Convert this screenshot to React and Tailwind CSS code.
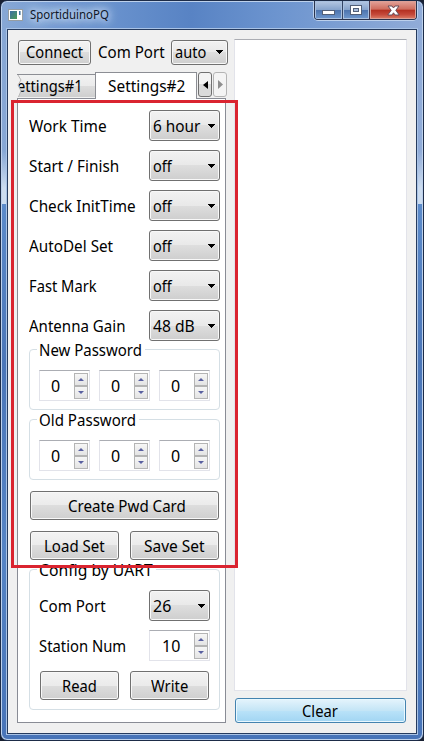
import { useLayoutEffect, useRef, useState } from 'react';
import clsx from 'clsx';

// Label squeezed horizontally to a fixed width, like the condensed system font.
function Label({ w, children, className }) {
  const ref = useRef(null);
  const [scale, setScale] = useState(1);
  useLayoutEffect(() => {
    setScale(w / ref.current.offsetWidth);
  }, [w]);
  return (
    <span className={clsx('block shrink-0 whitespace-nowrap', className)} style={{ width: w }}>
      <span ref={ref} className="inline-block origin-left" style={{ transform: `scaleX(${scale})` }}>
        {children}
      </span>
    </span>
  );
}

const face =
  'border border-[#707070] rounded-[3px] bg-[linear-gradient(#f3f3f3_0%,#ebebeb_50%,#dddddd_50%,#cfcfcf_100%)] shadow-[inset_0_0_0_1px_#f8f8f8]';

function Button({ className, w, children }) {
  return (
    <button className={clsx('flex shrink-0 items-center justify-center', face, className)}>
      <Label w={w}>{children}</Label>
    </button>
  );
}

function Combo({ className, w, children }) {
  return (
    <div className={clsx('flex shrink-0 items-center justify-between rounded-[3px] border border-[#707070] bg-[linear-gradient(#f2f2f2,#e9e9e9_50%,#dedede_50%,#cecece)] pl-[3px] pr-1 shadow-[inset_0_0_0_1px_#f8f8f8]', className)}>
      <Label w={w}>{children}</Label>
      <svg width="8" height="4" viewBox="0 0 8 4" shapeRendering="crispEdges"><path d="M0 0h8L4 4z" /></svg>
    </div>
  );
}

function Arrow({ up }) {
  return (
    <div className="flex h-[13px] w-[14px] items-center justify-center border border-[#b4b4b4] bg-[linear-gradient(#f6f6f6,#e4e4e4)]">
      <svg width="6" height="3" viewBox="0 0 6 3"><path fill="#5960a0" d={up ? 'M0 3h6L3 0z' : 'M0 0h6L3 3z'} /></svg>
    </div>
  );
}

function Spin({ className, w, children }) {
  return (
    <div className={clsx('flex h-[31px] shrink-0 items-center justify-between border border-[#e2e3ea] border-t-[#abadb3] bg-white pr-px', className)}>
      <Label w={w}>{children}</Label>
      <div className="flex flex-col"><Arrow up /><Arrow /></div>
    </div>
  );
}

function Group({ title, w, className, children }) {
  return (
    <fieldset className={clsx('relative w-[191px] shrink-0 rounded-[4px] border border-[#d5dfe5]', className)}>
      <div className="absolute left-[7px] top-[-10px] bg-white pl-[2px] pr-[3px] leading-[20px]"><Label w={w}>{title}</Label></div>
      {children}
    </fieldset>
  );
}

const rows = [
  ['Work Time', 78, '6 hour', 47],
  ['Start / Finish', 90, 'off', 19],
  ['Check InitTime', 107, 'off', 19],
  ['AutoDel Set', 84, 'off', 19],
  ['Fast Mark', 68, 'off', 19],
  ['Antenna Gain', 96, '48 dB', 42],
];

function Passwords({ title, w, className }) {
  return (
    <Group title={title} w={w} className={clsx('h-[61px]', className)}>
      <div className="flex gap-[9px] pl-[9px] pt-5">
        {[0, 1, 2].map((i) => <Spin key={i} className="w-[51px] pl-[11px]" w={9}>0</Spin>)}
      </div>
    </Group>
  );
}

function TitleBar() {
  return (
    <header className="flex h-[28px] shrink-0 items-start justify-between pl-[7px] pr-[6px] text-[12px] leading-[16px]">
      <div className="flex items-center pt-[6px]">
        <svg width="15" height="12" viewBox="0 0 15 12" shapeRendering="crispEdges">
          <path fill="#969da2" d="M0 0h15v12H0z" /><path fill="#fff" d="M1 1h13v10H1z" />
          <defs><linearGradient id="app" x2="1" y2="1"><stop stopColor="#3b6ea5" /><stop offset="1" stopColor="#4a9b55" /></linearGradient></defs>
          <path fill="url(#app)" d="M2 2h7v8H2z" /><path fill="#3e73a4" d="M11 2h1v4h-1z" /><path fill="#96b2c8" d="M12 2h1v4h-1z" />
        </svg>
        <div className="ml-[7px] text-[#101828] [text-shadow:0_0_6px_#d7e5f8,0_0_10px_#d7e5f8,0_0_12px_#d7e5f8]"><Label w={79}>SportiduinoPQ</Label></div>
      </div>
      <div className="flex h-[19px] overflow-hidden rounded-b-[4px] border border-t-0 border-[#29334e] shadow-[0_0_0_1px_#bcd0ec]">
        <div className="flex w-[28px] items-center justify-center border-r border-[#344566] bg-[linear-gradient(#b6c8e2_0%,#86a3cc_48%,#4c73ad_50%,#7099cf_100%)] pt-[5px] shadow-[inset_0_0_0_1px_#a9c0df]">
          <svg width="13" height="5" shapeRendering="crispEdges"><path fill="#536078" d="M0 0h13v5H0z" /><path fill="#fff" d="M1 1h11v3H1z" /></svg>
        </div>
        <div className="flex w-[27px] items-center justify-center border-r border-[#44364b] bg-[linear-gradient(#b6c8e2_0%,#86a3cc_48%,#4c73ad_50%,#7099cf_100%)] shadow-[inset_0_0_0_1px_#a9c0df]">
          <svg width="12" height="10" shapeRendering="crispEdges"><path fill="#536078" d="M0 0h12v10H0z" /><path fill="#fff" d="M1 1h10v8H1z" /><path fill="#536078" d="M3 3h6v4H3z" /><path fill="#a8bddc" d="M4 4h4v2H4z" /></svg>
        </div>
        <div className="flex w-[46px] items-center justify-center bg-[linear-gradient(#e3a49b_0%,#cf6c5d_46%,#b32f20_50%,#c5493a_75%,#dc8069_100%)] shadow-[inset_0_0_0_1px_#dba097]">
          <svg width="13" height="11" viewBox="0 0 13 11"><path d="M1 1h4l1.5 2L8 1h4L8.8 5.3 12.2 10H8L6.5 7.8 5 10H.8l3.4-4.7z" fill="#fff" stroke="#694c58" /></svg>
        </div>
      </div>
    </header>
  );
}

export default function App() {
  return (
    <div className="h-[741px] w-[424px] bg-[#182032] font-['Noto_Sans','Open_Sans',sans-serif] text-[16px] leading-[22px] text-black">
      <div className="relative flex h-full w-full flex-col overflow-hidden rounded-[7px] border border-[#1d2c48] bg-[linear-gradient(90deg,#88a8d5_0%,#739bd3_14%,#5883c4_45%,#6c94cf_65%,#91acd8_100%)] shadow-[inset_0_0_0_1px_#bdd1ec]">
        <div className="absolute inset-x-px bottom-px top-[203px] rounded-b-[6px] bg-[linear-gradient(#5c8bca,#4b76b8_30%,#5584c5_65%,#4874b8)]" />
        <div className="absolute inset-x-px top-[150px] h-[53px] bg-[linear-gradient(transparent,#ccdcef_70%)]" />
        <div className="relative flex h-full flex-col">
          <TitleBar />
          <main className="mx-[6px] flex h-[705px] shrink-0 justify-between border border-[#263b5e] bg-[#f0f0f0] pl-[10px] pr-[9px] shadow-[0_0_0_1px_#a9c3e6]">
            <section className="w-[211px]">
              <div className="flex h-[26px] items-center pt-0 mt-[9px]">
                <Button className="h-[25px] w-[73px]" w={57}>Connect</Button>
                <Label w={67} className="ml-[7px]">Com Port</Label>
                <Combo className="ml-[6px] h-[25px] w-[57px]" w={31}>auto</Combo>
              </div>
              <div className="-ml-px mt-[7px] flex h-[26px] items-end">
                <div className="relative flex h-[24px] w-[78px] items-center justify-end overflow-hidden border-y border-[#8c8e94] border-b-transparent bg-[linear-gradient(#f2f2f2,#ebebeb_50%,#dddddd_50%,#cfcfcf)] pr-[12px]">
                  <Label w={66}>ettings#1</Label>
                  <svg className="absolute left-0 top-0" width="5" height="24"><path d="M0 0h1l3 5-3 5 3 6-3 7H0z" fill="#f0f0f0" /><path d="M1 0l3 5-3 5 3 6-3 7" fill="none" stroke="#b8b8b8" /></svg>
                </div>
                <div className="z-10 -mb-px flex h-[27px] w-[102px] items-center justify-center border border-b-0 border-[#8c8e94] bg-white"><Label w={77}>Settings#2</Label></div>
                <div className="mb-px ml-px flex h-[25px] w-[14px] items-center justify-center rounded-[3px] border border-[#707070] bg-[linear-gradient(#f3f3f3_50%,#dadada_50%)]"><svg width="5" height="8"><path d="M5 0v8L0 4z" /></svg></div>
                <div className="mb-px ml-px flex h-[25px] w-[14px] items-center justify-center rounded-[3px] border border-[#b4b4b4] bg-[#f4f4f4]"><svg width="5" height="9"><path fill="#8e8e8e" d="M0 0v9l5-4.5z" /></svg></div>
              </div>
              <div className="-ml-px flex h-[625px] w-[209px] flex-col border border-[#898c95] bg-white pl-[11px] pt-[11px]">
                <div className="flex flex-col gap-[9px]">
                  {rows.map(([label, w, value, vw]) => (
                    <div key={label} className="flex h-[31px] w-[191px] items-center justify-between">
                      <Label w={w}>{label}</Label>
                      <Combo className="h-[31px] w-[71px]" w={vw}>{value}</Combo>
                    </div>
                  ))}
                </div>
                <Passwords title="New Password" w={103} className="mt-[8px]" />
                <Passwords title="Old Password" w={97} className="mt-[9px]" />
                <div className="ml-px mt-[11px] flex w-[189px] shrink-0 flex-wrap justify-between gap-y-[11px]">
                  <Button className="h-[29px] w-[189px] pl-[5px]" w={118}>Create Pwd Card</Button>
                  <Button className="h-[29px] w-[89px]" w={61}>Load Set</Button>
                  <Button className="h-[29px] w-[89px]" w={61}>Save Set</Button>
                </div>
                <Group title="Config by UART" w={114} className="mt-[9px] h-[141px]">
                  <div className="flex flex-col gap-[9px] pl-[9px] pr-[9px] pt-[20px]">
                    <div className="flex items-center justify-between"><Label w={67}>Com Port</Label><Combo className="h-[31px] w-[61px]" w={18}>26</Combo></div>
                    <div className="flex items-center justify-between"><Label w={87}>Station Num</Label><Spin className="w-[61px] pl-[12px]" w={18}>10</Spin></div>
                    <div className="flex justify-between px-px pt-px">
                      <Button className="h-[29px] w-[79px]" w={35}>Read</Button>
                      <Button className="h-[29px] w-[79px]" w={37}>Write</Button>
                    </div>
                  </div>
                </Group>
              </div>
            </section>
            <section className="flex w-[173px] flex-col pt-[9px]">
              <div className="h-[652px] border border-[#e2e3ea] border-t-[#abadb3] bg-white" />
              <button className="ml-px mt-[7px] flex h-[25px] w-[171px] items-center justify-center rounded-[3px] border border-[#4483af] bg-[linear-gradient(#e5f4fc_0%,#c4e5f6_50%,#b9e2f8_52%,#a1d5f3_100%)] pr-[2px] shadow-[inset_0_0_0_1px_#e9f8ff]"><Label w={36}>Clear</Label></button>
            </section>
          </main>
        </div>
        <div className="absolute left-[10px] top-[99px] z-20 h-[468px] w-[227px] border-[3px] border-[#da2430]" />
      </div>
    </div>
  );
}
